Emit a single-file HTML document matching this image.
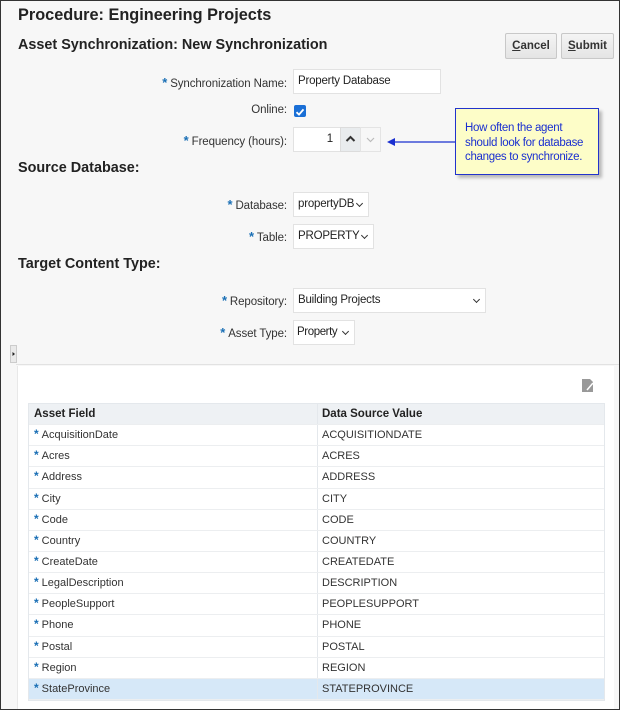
<!DOCTYPE html>
<html><head><meta charset="utf-8"><style>
*{box-sizing:border-box;margin:0;padding:0}
body{width:620px;height:710px;background:#f7f7f7;font-family:"Liberation Sans",Arial,sans-serif;color:#333;position:relative;overflow:hidden}
.frame{position:absolute;left:0;top:0;width:620px;height:710px;border:1px solid #333;pointer-events:none;z-index:10}
.a{position:absolute}
h1{position:absolute;left:18px;top:6px;font-size:16.3px;font-weight:bold;color:#222}
.h2{position:absolute;left:18px;font-size:14.4px;font-weight:bold;color:#222}
.btn{position:absolute;top:33px;height:26px;border:1px solid #c8c8c8;background:linear-gradient(#f4f4f4,#e4e4e4);font-size:11.5px;font-weight:bold;color:#333;text-align:center;line-height:24px;border-radius:2px}
.lbl{position:absolute;right:333px;font-size:11.5px;color:#333;text-align:right;white-space:nowrap;letter-spacing:-0.1px}
.lbl b{color:#1a6fb5;font-weight:bold;font-size:13px;margin-right:3px}
.inp{position:absolute;left:293px;height:25px;background:#fff;border:1px solid #e2e2e2;font-size:11.5px;line-height:23px;padding-left:4px;color:#222;letter-spacing:-0.2px;white-space:nowrap}
.chev{position:absolute;right:6px;top:8px;width:5px;height:5px;border-right:1.6px solid #333;border-bottom:1.6px solid #333;transform:rotate(45deg)}
.tbl{position:absolute;left:28px;top:403px;width:577px;border:1px solid #e4e8ec}
.r{height:21.15px;display:flex;font-size:11px;line-height:21px;border-bottom:1px solid #eceef0;background:#fff}
.r div:first-child{width:289px;border-right:1px solid #e4e8ec;padding-left:5px}
.r div:last-child{padding-left:4px}
.r.hd{background:#eef1f4;font-weight:bold;font-size:11.5px;color:#222}
.r.sel{background:#d6e8f8}
.s{color:#1a6fb5;font-weight:bold;font-size:12px;margin-right:3px;vertical-align:top;line-height:18px}
</style></head><body>
<div class="frame"></div>
<h1>Procedure: Engineering Projects</h1>
<div class="h2" style="top:37px">Asset Synchronization: New Synchronization</div>
<div class="btn" style="left:505px;width:52px"><u>C</u>ancel</div>
<div class="btn" style="left:561px;width:53px"><u>S</u>ubmit</div>

<div class="lbl" style="top:75px"><b>*</b>Synchronization Name:</div>
<div class="inp" style="top:69px;width:148px">Property Database</div>
<div class="lbl" style="top:104px">Online:</div>
<div class="a" style="left:294px;top:105px;width:12px;height:12px;background:#1a6fd6;border-radius:2px"><svg width="12" height="12" viewBox="0 0 12 12"><path d="M2.5 6.2L5 8.6 9.5 3.4" stroke="#fff" stroke-width="1.8" fill="none"/></svg></div>
<div class="lbl" style="top:133px"><b>*</b>Frequency (hours):</div>
<div class="inp" style="top:127px;width:48px;text-align:right;padding-right:7px">1</div>
<div class="a" style="left:340px;top:127px;width:21px;height:25px;background:#e9ecee;border:1px solid #dcdcdc"><svg width="19" height="23"><path d="M5.5 13L9.5 9 13.5 13" stroke="#333" stroke-width="2" fill="none"/></svg></div>
<div class="a" style="left:360px;top:127px;width:21px;height:25px;background:#f7f7f7;border:1px solid #e4e4e4"><svg width="19" height="23"><path d="M6 10L9.5 13.5 13 10" stroke="#bbb" stroke-width="1.2" fill="none"/></svg></div>
<svg class="a" style="left:385px;top:136px" width="72" height="12"><path d="M9 6H71" stroke="#1a2fd0" stroke-width="1.2"/><path d="M2 6L10 2V10Z" fill="#1a2fd0"/></svg>
<div class="a" style="left:455px;top:108px;width:144px;height:67px;background:#fdfdc8;border:1px solid #2233cc;box-shadow:3px 3px 3px rgba(0,0,0,.25);font-size:11.5px;color:#1a2fd0;padding:12px 0 0 9px;line-height:14.5px;letter-spacing:-0.3px">How often the agent<br>should look for database<br>changes to synchronize.</div>

<div class="h2" style="top:160px">Source Database:</div>
<div class="lbl" style="top:197px"><b>*</b>Database:</div>
<div class="inp" style="top:192px;width:76px">propertyDB<span class="chev"></span></div>
<div class="lbl" style="top:229px"><b>*</b>Table:</div>
<div class="inp" style="top:224px;width:81px">PROPERTY<span class="chev"></span></div>
<div class="h2" style="top:256px">Target Content Type:</div>
<div class="lbl" style="top:293px"><b>*</b>Repository:</div>
<div class="inp" style="top:288px;width:193px">Building Projects<span class="chev"></span></div>
<div class="lbl" style="top:325px"><b>*</b>Asset Type:</div>
<div class="inp" style="top:320px;width:62px;letter-spacing:-0.4px;padding-left:3px">Property<span class="chev"></span></div>

<div class="a" style="left:10px;top:345px;width:7px;height:18px;background:#eaeaea;border:1px solid #ccc"><svg width="5" height="16"><path d="M1.5 6L4 8 1.5 10Z" fill="#222"/></svg></div>
<div class="a" style="left:16px;top:364px;width:604px;height:1px;background:#e2e2e2"></div>
<div class="a" style="left:17px;top:366px;width:597px;height:344px;background:#fff;border-left:1px solid #e8e8e8"></div>
<svg class="a" style="left:581px;top:378px" width="14" height="15"><path d="M1 1H9L12 4V14H1Z" fill="#999"/><path d="M6 12L12 5" stroke="#fff" stroke-width="1.5"/></svg>

<div class="tbl">
<div class="r hd"><div>Asset Field</div><div>Data Source Value</div></div>
<div class="r"><div><span class="s">*</span>AcquisitionDate</div><div>ACQUISITIONDATE</div></div>
<div class="r"><div><span class="s">*</span>Acres</div><div>ACRES</div></div>
<div class="r"><div><span class="s">*</span>Address</div><div>ADDRESS</div></div>
<div class="r"><div><span class="s">*</span>City</div><div>CITY</div></div>
<div class="r"><div><span class="s">*</span>Code</div><div>CODE</div></div>
<div class="r"><div><span class="s">*</span>Country</div><div>COUNTRY</div></div>
<div class="r"><div><span class="s">*</span>CreateDate</div><div>CREATEDATE</div></div>
<div class="r"><div><span class="s">*</span>LegalDescription</div><div>DESCRIPTION</div></div>
<div class="r"><div><span class="s">*</span>PeopleSupport</div><div>PEOPLESUPPORT</div></div>
<div class="r"><div><span class="s">*</span>Phone</div><div>PHONE</div></div>
<div class="r"><div><span class="s">*</span>Postal</div><div>POSTAL</div></div>
<div class="r"><div><span class="s">*</span>Region</div><div>REGION</div></div>
<div class="r sel"><div><span class="s">*</span>StateProvince</div><div>STATEPROVINCE</div></div>
</div>
</body></html>
